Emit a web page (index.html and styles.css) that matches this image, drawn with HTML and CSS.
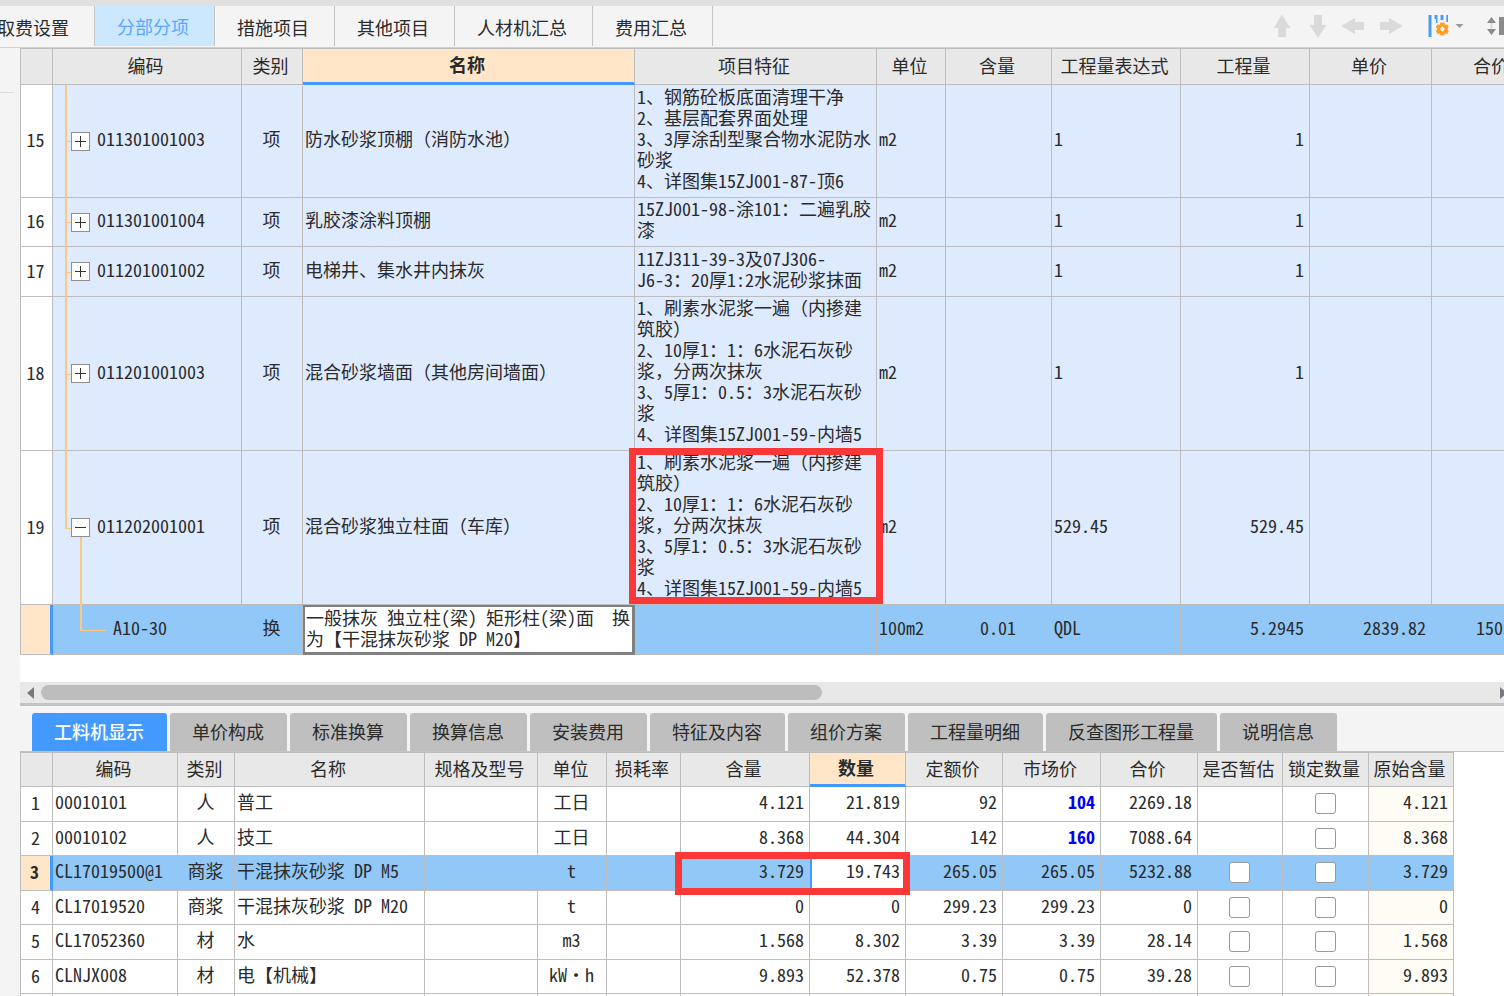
FILE: index.html
```html
<!DOCTYPE html>
<html lang="zh-CN">
<head>
<meta charset="utf-8">
<title>分部分项</title>
<link rel="stylesheet" href="styles.css">
</head>
<body>
<div class="app">
  <header class="topbar">
    <nav class="tabs">
      <button class="tab" type="button">取费设置</button>
      <button class="tab active" type="button">分部分项</button>
      <button class="tab" type="button">措施项目</button>
      <button class="tab" type="button">其他项目</button>
      <button class="tab" type="button">人材机汇总</button>
      <button class="tab" type="button">费用汇总</button>
    </nav>
    <div class="tools">
      <button class="tool vertical" type="button" aria-label="上移"><svg width="18" height="24" viewBox="0 0 18 24"><path d="M9 0.5 17.3 14H13V23H5V14H0.7z" fill="#dadada"/></svg></button>
      <button class="tool" type="button" aria-label="下移"><svg width="18" height="24" viewBox="0 0 18 24"><path d="M9 24 17.3 11H13V1H5V11H0.7z" fill="#dadada"/></svg></button>
      <button class="tool" type="button" aria-label="左移"><svg width="24" height="18" viewBox="0 0 24 18"><path d="M0.5 9 14 0.7V5H23V13H14V17.3z" fill="#dadada"/></svg></button>
      <button class="tool" type="button" aria-label="右移"><svg width="24" height="18" viewBox="0 0 24 18"><path d="M23.5 9 10 0.7V5H1V13H10V17.3z" fill="#dadada"/></svg></button>
      <button class="tool columns" type="button" aria-label="列设置"><svg width="36" height="24" viewBox="0 0 36 24"><g fill="#4a9cf5"><path d="M0.5 1H3.5V23H0.5z"/><path d="M6.500 1H9.500V9H8V5H6.500zM12.500 1H15.500V6H12.500zM18.300 1H20V8H18.300z"/></g><path d="M12.6 8.5h3.6l.8 2.200 2.300-.3 1.400 2.600-1.400 2 1.400 2.200-1.500 2.700-2.300-.3-.9 2h-3.400l-.9-2-2.300.3L7.900 17.200l1.400-2.200-1.400-2 1.500-2.600 2.300.3z" fill="#ff9d22"/><path d="M14.400 12.300 17 15 14.400 17.700 11.800 15z" fill="#fff3df"/><path d="M27.500 10H35.500L31.500 14z" fill="#999"/></svg></button>
      <button class="tool" type="button" aria-label="行高"><svg width="17" height="20" viewBox="0 0 17 20"><path d="M0 7 4.500 1 9 7zM0 13H9L4.500 19zM12 1H17V19H12z" fill="#8b8b8b"/><path d="M3.500 7H5.500V13H3.500z" fill="#ddd"/></svg></button>
    </div>
  </header>

  <div class="workspace">
    <aside class="gutter"></aside>
    <main class="main">
      <section class="bill">
        <table class="grid bill-grid">
          <colgroup><col class="w32"><col class="w189"><col class="w61"><col class="w332"><col class="w242"><col class="w69"><col class="w106"><col class="w129"><col class="w129"><col class="w122"><col class="w122"></colgroup>
          <thead>
            <tr><th></th><th>编码</th><th>类别</th><th class="current">名称</th><th>项目特征</th><th>单位</th><th>含量</th><th>工程量表达式</th><th>工程量</th><th>单价</th><th>合价</th></tr>
          </thead>
          <tbody>
            <tr class="lines5"><td class="num">15</td><td class="tree"><button class="toggle plus" type="button" aria-label="展开"></button>011301001003</td><td class="mid">项</td><td>防水砂浆顶棚<span class="full">（</span>消防水池<span class="full">）</span></td><td class="note">1、钢筋砼板底面清理干净<br>2、基层配套界面处理<br>3、3厚涂刮型聚合物水泥防水<br>砂浆<br>4、详图集15ZJ001-87-顶6</td><td>m2</td><td></td><td>1</td><td class="right">1</td><td></td><td></td></tr>
            <tr class="lines2"><td class="num">16</td><td class="tree"><button class="toggle plus" type="button" aria-label="展开"></button>011301001004</td><td class="mid">项</td><td>乳胶漆涂料顶棚</td><td class="note">15ZJ001-98-涂101：二遍乳胶<br>漆</td><td>m2</td><td></td><td>1</td><td class="right">1</td><td></td><td></td></tr>
            <tr class="lines2b"><td class="num">17</td><td class="tree"><button class="toggle plus" type="button" aria-label="展开"></button>011201001002</td><td class="mid">项</td><td>电梯井、集水井内抹灰</td><td class="note">11ZJ311-39-3及07J306-<br>J6-3：20厚1:2水泥砂浆抹面</td><td>m2</td><td></td><td>1</td><td class="right">1</td><td></td><td></td></tr>
            <tr class="lines7"><td class="num">18</td><td class="tree"><button class="toggle plus" type="button" aria-label="展开"></button>011201001003</td><td class="mid">项</td><td>混合砂浆墙面<span class="full">（</span>其他房间墙面<span class="full">）</span></td><td class="note">1、刷素水泥浆一遍<span class="full">（</span>内掺建<br>筑胶<span class="full">）</span><br>2、10厚1：1：6水泥石灰砂<br>浆<span class="full">，</span>分两次抹灰<br>3、5厚1：0.5：3水泥石灰砂<br>浆<br>4、详图集15ZJ001-59-内墙5</td><td>m2</td><td></td><td>1</td><td class="right">1</td><td></td><td></td></tr>
            <tr class="lines7"><td class="num">19</td><td class="tree open"><button class="toggle" type="button" aria-label="折叠"></button>011202001001</td><td class="mid">项</td><td>混合砂浆独立柱面<span class="full">（</span>车库<span class="full">）</span></td><td class="note marked">1、刷素水泥浆一遍<span class="full">（</span>内掺建<br>筑胶<span class="full">）</span><br>2、10厚1：1：6水泥石灰砂<br>浆<span class="full">，</span>分两次抹灰<br>3、5厚1：0.5：3水泥石灰砂<br>浆<br>4、详图集15ZJ001-59-内墙5</td><td>m2</td><td></td><td>529.45</td><td class="right">529.45</td><td></td><td></td></tr>
            <tr class="lines2b selected"><td class="num"></td><td class="tree leaf">A10-30</td><td class="mid">换</td><td class="note editing">一般抹灰 独立柱(梁) 矩形柱(梁)面  换<br>为【干混抹灰砂浆 DP M20】</td><td></td><td>100m2</td><td class="mid">0.01</td><td>QDL</td><td class="right">5.2945</td><td class="right">2839.82</td><td class="right">15035.43</td></tr>
          </tbody>
        </table>
      </section>

      <div class="scrollbar">
        <svg width="7" height="12" viewBox="0 0 7 12"><path d="M7 0V12L0 6z" fill="#77797f"/></svg>
        <div class="track"><div class="thumb"></div></div>
        <svg width="4" height="12" viewBox="0 0 4 12"><path d="M0 0V12L7 6z" fill="#77797f"/></svg>
      </div>

      <nav class="subtabs">
        <button class="subtab active" type="button">工料机显示</button>
        <button class="subtab" type="button">单价构成</button>
        <button class="subtab" type="button">标准换算</button>
        <button class="subtab" type="button">换算信息</button>
        <button class="subtab" type="button">安装费用</button>
        <button class="subtab" type="button">特征及内容</button>
        <button class="subtab" type="button">组价方案</button>
        <button class="subtab" type="button">工程量明细</button>
        <button class="subtab" type="button">反查图形工程量</button>
        <button class="subtab" type="button">说明信息</button>
      </nav>

      <section class="detail">
        <table class="grid detail-grid">
          <colgroup><col class="w32"><col class="w125"><col class="w57"><col class="w190"><col class="w113"><col class="w69"><col class="w74"><col class="w129"><col class="w96"><col class="w97"><col class="w98"><col class="w97"><col class="w85"><col class="w86"><col class="w85"></colgroup>
          <thead>
            <tr><th></th><th>编码</th><th>类别</th><th>名称</th><th>规格及型号</th><th>单位</th><th>损耗率</th><th>含量</th><th class="current">数量</th><th>定额价</th><th>市场价</th><th>合价</th><th>是否暂估</th><th>锁定数量</th><th>原始含量</th></tr>
          </thead>
          <tbody>
            <tr><td class="num">1</td><td>00010101</td><td class="mid">人</td><td>普工</td><td></td><td class="mid">工日</td><td></td><td class="right">4.121</td><td class="right">21.819</td><td class="right">92</td><td class="right changed">104</td><td class="right">2269.18</td><td></td><td class="mid"><input type="checkbox" aria-label="锁定数量"></td><td class="right origin">4.121</td></tr>
            <tr><td class="num">2</td><td>00010102</td><td class="mid">人</td><td>技工</td><td></td><td class="mid">工日</td><td></td><td class="right">8.368</td><td class="right">44.304</td><td class="right">142</td><td class="right changed">160</td><td class="right">7088.64</td><td></td><td class="mid"><input type="checkbox" aria-label="锁定数量"></td><td class="right origin">8.368</td></tr>
            <tr class="selected"><td class="num">3</td><td>CL17019500@1</td><td class="mid">商浆</td><td>干混抹灰砂浆 DP M5</td><td></td><td class="mid">t</td><td></td><td class="right marked-pair">3.729</td><td class="right focus">19.743</td><td class="right">265.05</td><td class="right">265.05</td><td class="right">5232.88</td><td class="mid"><input type="checkbox" aria-label="是否暂估"></td><td class="mid"><input type="checkbox" aria-label="锁定数量"></td><td class="right">3.729</td></tr>
            <tr><td class="num">4</td><td>CL17019520</td><td class="mid">商浆</td><td>干混抹灰砂浆 DP M20</td><td></td><td class="mid">t</td><td></td><td class="right">0</td><td class="right">0</td><td class="right">299.23</td><td class="right">299.23</td><td class="right">0</td><td class="mid"><input type="checkbox" aria-label="是否暂估"></td><td class="mid"><input type="checkbox" aria-label="锁定数量"></td><td class="right origin">0</td></tr>
            <tr><td class="num">5</td><td>CL17052360</td><td class="mid">材</td><td>水</td><td></td><td class="mid">m3</td><td></td><td class="right">1.568</td><td class="right">8.302</td><td class="right">3.39</td><td class="right">3.39</td><td class="right">28.14</td><td class="mid"><input type="checkbox" aria-label="是否暂估"></td><td class="mid"><input type="checkbox" aria-label="锁定数量"></td><td class="right origin">1.568</td></tr>
            <tr><td class="num">6</td><td>CLNJX008</td><td class="mid">材</td><td>电【机械】</td><td></td><td class="mid">kW·h</td><td></td><td class="right">9.893</td><td class="right">52.378</td><td class="right">0.75</td><td class="right">0.75</td><td class="right">39.28</td><td class="mid"><input type="checkbox" aria-label="是否暂估"></td><td class="mid"><input type="checkbox" aria-label="锁定数量"></td><td class="right origin">9.893</td></tr>
            <tr><td class="num"></td><td></td><td></td><td></td><td></td><td></td><td></td><td></td><td></td><td></td><td></td><td></td><td></td><td></td><td class="origin"></td></tr>
          </tbody>
        </table>
      </section>
    </main>
  </div>
</div>
</body>
</html>
```
FILE: styles.css
```css
:root {
  --line: #bdbdbd;
  --blue: #4499ff;
  --peach: #ffe6c8;
  --branch: #fbc880;
  --red: #fb3838;
  --ink: #2b2b2b;
}

* { box-sizing: border-box; }

body {
  margin: 0;
  height: 100vh;
  overflow: hidden;
  background: #f4f4f4;
  color: var(--ink);
  font: 18px/21px "Noto Sans CJK SC", sans-serif;
  text-spacing-trim: space-all;
}

button {
  border: 0;
  margin: 0;
  padding: 0;
  background: none;
  color: inherit;
  font: inherit;
  white-space: nowrap;
}

.app {
  height: 100%;
  display: flex;
  flex-direction: column;
}

/* top bar */
.topbar {
  display: flex;
  flex: none;
  height: 48px;
  padding-bottom: 1px;
  border-top: 6px solid #e0e0e0;
  border-bottom: 1px solid #d0d0d0;
  overflow: hidden;
}
.tabs { display: flex; margin-left: -25px; }
.tab {
  padding: 3px 25px 0 22px;
  border-right: 1px solid #c6c6c6;
}
.tab.active {
  padding-top: 0;
  background: #cce8ff;
  color: #5aa6ff;
}
.tools {
  display: flex;
  align-items: center;
  margin-left: auto;
}
.tool { display: flex; margin-right: 14px; }
.tool.vertical { margin-right: 18px; }
.tool.columns { margin: 0 23px 0 11px; }
.tool:last-child { margin-right: 0; }

/* frame */
.workspace { display: flex; flex: 1; min-height: 0; }
.gutter {
  flex: none;
  width: 20px;
}
.gutter::before {
  content: "";
  display: block;
  width: 14px;
  height: 44px;
  border-bottom: 1px solid #dcdcdc;
}
.main {
  flex: 1;
  min-width: 0;
  display: flex;
  flex-direction: column;
}

/* grids */
.grid {
  table-layout: fixed;
  border-collapse: separate;
  border-spacing: 0;
  border-left: 1px solid var(--line);
  border-top: 1px solid var(--line);
  font-feature-settings: "hwid";
}
.grid .full { font-feature-settings: normal; }
.grid th,
.grid td {
  padding: 0 3px 5px 2px;
  border-right: 1px solid var(--line);
  border-bottom: 1px solid var(--line);
  text-align: left;
  white-space: pre;
}
.grid th {
  padding: 0 3px 3px 0;
  background: #e8e8e8;
  font-weight: inherit;
  text-align: center;
}
.grid th.current {
  background: var(--peach);
  border-bottom: 3px solid var(--blue);
  font-weight: 700;
}
.grid td.num { padding: 0 2px 3px 0; background: #fff; text-align: center; }
.grid td.mid { text-align: center; }
.grid td.right { padding-right: 5px; text-align: right; }
.grid .selected td { background: #91c8f7; }
.grid .selected td.num {
  background: var(--peach);
  border-right: 3px solid var(--blue);
  font-weight: 700;
}

.w32 { width: 32px; }
.w57 { width: 57px; }
.w61 { width: 61px; }
.w69 { width: 69px; }
.w74 { width: 74px; }
.w85 { width: 85px; }
.w86 { width: 86px; }
.w96 { width: 96px; }
.w97 { width: 97px; }
.w98 { width: 98px; }
.w106 { width: 106px; }
.w113 { width: 113px; }
.w122 { width: 122px; }
.w125 { width: 125px; }
.w129 { width: 129px; }
.w189 { width: 189px; }
.w190 { width: 190px; }
.w242 { width: 242px; }
.w332 { width: 332px; }

/* bill grid */
.bill {
  flex: none;
  padding-bottom: 27px;
  background: #fff;
  overflow: hidden;
}
.bill-grid { width: 1534px; }
.bill-grid thead tr { height: 36px; }
.bill-grid td { background: #deeafe; }
.lines2 { height: 49px; }
.lines2b { height: 50px; }
.lines5 { height: 113px; }
.lines7 { height: 154px; }
.grid td.note { padding-bottom: 6px; }
.grid td.tree { position: relative; padding-left: 18px; padding-bottom: 3px; }
.tree::before,
.tree::after {
  content: "";
  position: absolute;
  z-index: 1;
  left: 12px;
  background: var(--branch);
}
.tree::before { top: 0; bottom: -1px; width: 2px; }
.tree::after { top: 50%; width: 6px; height: 1px; }
.tree.open::before { bottom: 50%; }
.toggle {
  position: relative;
  display: inline-block;
  width: 19px;
  height: 19px;
  margin-right: 7px;
  border: 1px solid #8f8f8f;
  background: linear-gradient(#333, #333) center / 11px 1px no-repeat #fff;
  vertical-align: middle;
}
.toggle.plus {
  background:
    linear-gradient(#333, #333) center / 11px 1px no-repeat,
    linear-gradient(#333, #333) center / 1px 11px no-repeat,
    #fff;
}
.open .toggle::after {
  content: "";
  position: absolute;
  z-index: 1;
  left: 8px;
  top: 18px;
  width: 2px;
  height: 70px;
  background: var(--branch);
}
.grid td.leaf { padding-left: 60px; padding-bottom: 5px; }
.tree.leaf::before { left: 27px; bottom: 50%; }
.tree.leaf::after { left: 27px; width: 26px; }
.grid .selected td.editing {
  padding: 0 0 3px 1px;
  border: 3px solid #808080;
  border-width: 2px 3px 3px 2px;
  background: #fff;
}

/* red marks */
.marked,
.marked-pair { position: relative; }
.marked::after,
.marked-pair::after {
  content: "";
  position: absolute;
  z-index: 2;
  border: 7px solid var(--red);
}
.marked::after { inset: -3px -7px 0 -6px; }
.marked-pair::after { inset: -4px -101px -5px -6px; }

/* scrollbar */
.scrollbar {
  display: flex;
  flex: none;
  align-items: center;
  gap: 7px;
  height: 24px;
  padding-left: 7px;
  border-bottom: 3px solid #c2c2c2;
  background: #e8e8e8;
}
.track { flex: 1; }
.thumb {
  width: 53.8%;
  height: 15px;
  border-radius: 8px;
  background: #bdbdbd;
}

/* lower tabs */
.subtabs {
  display: flex;
  flex: none;
  gap: 3px;
  height: 46px;
  padding: 7px 0 0 12px;
  border-bottom: 1px solid #c4c4c4;
}
.subtab {
  padding: 0 23px 2px 22px;
  border-radius: 3px 3px 0 0;
  background: #bfbfbf;
}
.subtab.active {
  background: var(--blue);
  color: #fff;
  font-weight: 500;
}

/* detail grid */
.detail {
  flex: 1;
  min-height: 0;
  overflow: hidden;
  background: #fff;
}
.detail-grid { width: 1434px; }
.detail-grid thead tr { height: 34px; }
.detail-grid tbody tr { height: 34px; }
.detail-grid tbody tr:nth-child(odd) { height: 35px; }
.detail-grid td.origin { background: #fffbf5; }
.detail-grid td.changed { color: #0000f5; font-weight: 700; }
.grid .selected td.focus {
  border-left: 2px solid var(--blue);
  border-right-color: var(--blue);
  border-bottom-color: var(--blue);
  background: #fff;
}
.detail-grid input {
  appearance: none;
  display: block;
  width: 21px;
  height: 21px;
  margin: 4px auto 0;
  border: 1px solid #999;
  border-radius: 3px;
  background: #fff;
}
```
